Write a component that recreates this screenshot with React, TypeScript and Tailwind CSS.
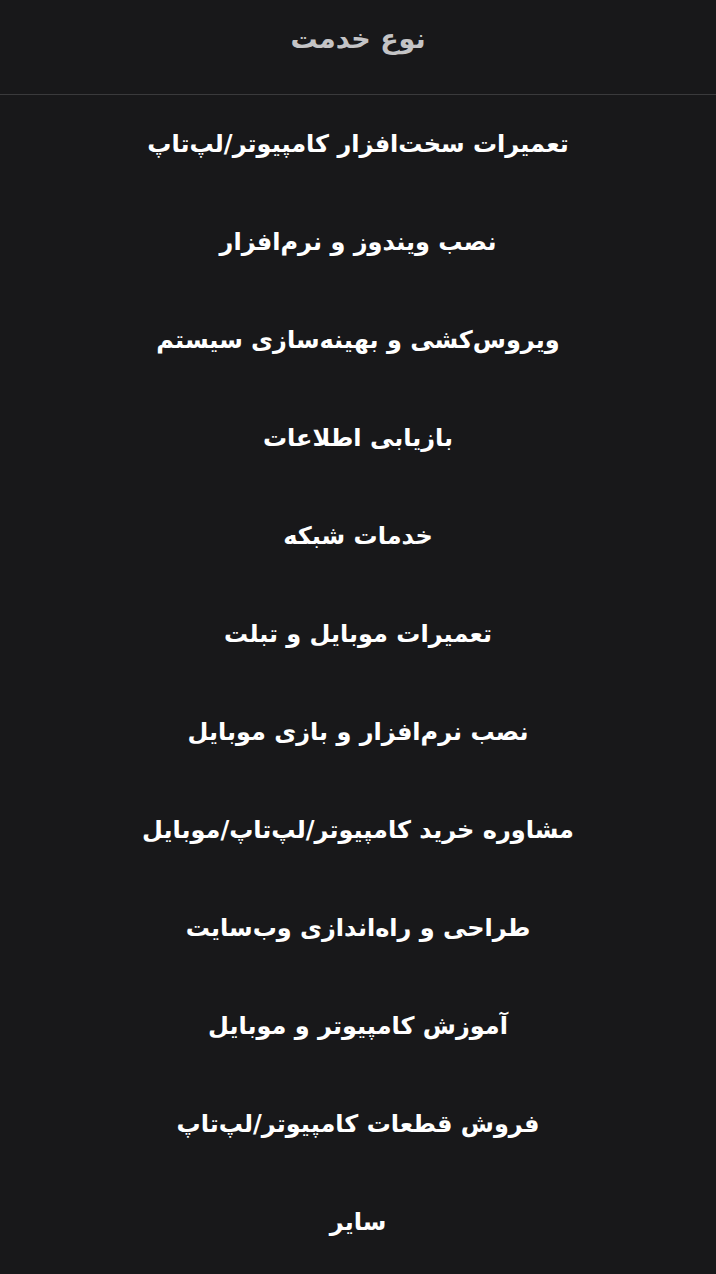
const services = [
  "تعمیرات سخت‌افزار کامپیوتر/لپ‌تاپ",
  "نصب ویندوز و نرم‌افزار",
  "ویروس‌کشی و بهینه‌سازی سیستم",
  "بازیابی اطلاعات",
  "خدمات شبکه",
  "تعمیرات موبایل و تبلت",
  "نصب نرم‌افزار و بازی موبایل",
  "مشاوره خرید کامپیوتر/لپ‌تاپ/موبایل",
  "طراحی و راه‌اندازی وب‌سایت",
  "آموزش کامپیوتر و موبایل",
  "فروش قطعات کامپیوتر/لپ‌تاپ",
  "سایر",
];

export default function App() {
  return (
    <div
      dir="rtl"
      className="min-h-[1274px] w-full bg-[#18181a] font-['DejaVu_Sans',sans-serif]"
    >
      {/* Sheet title */}
      <div className="flex h-[95px] items-center justify-center border-b border-[#3a3a3c] pb-[15px]">
        <span className="text-[27px] font-bold text-[#c4c4c6]">نوع خدمت</span>
      </div>
      {/* Options */}
      <ul className="flex flex-col">
        {services.map((s) => (
          <li
            key={s}
            className="flex h-[98px] items-center justify-center text-[24px] font-bold text-white"
          >
            {s}
          </li>
        ))}
      </ul>
    </div>
  );
}
